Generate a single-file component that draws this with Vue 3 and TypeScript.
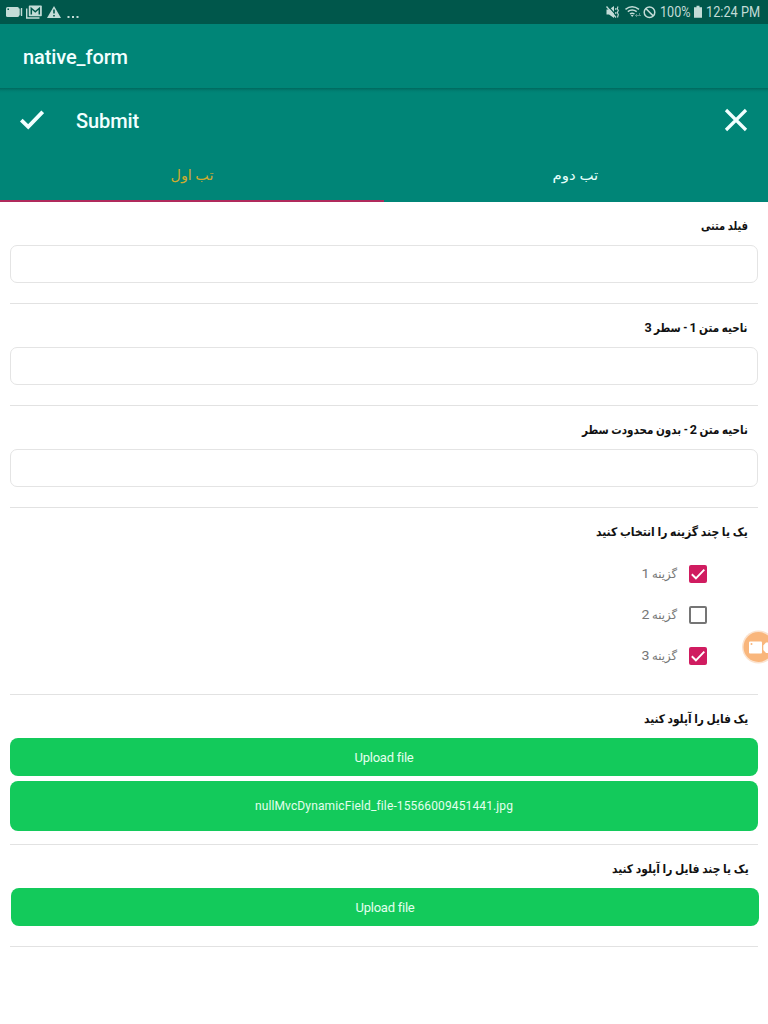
<script setup lang="ts">
import { nextTick, onMounted, reactive } from 'vue'

interface Label {
  text: string
  width: number
}

const labels: Record<string, Label> = {
  tab1: { text: 'تب اول', width: 43 },
  tab2: { text: 'تب دوم', width: 46 },
  field: { text: 'فیلد متنی', width: 47 },
  area1: { text: 'ناحیه متن 1 - سطر 3', width: 103 },
  area2: { text: 'ناحیه متن 2 - بدون محدودت سطر', width: 166 },
  choose: { text: 'یک یا چند گزینه را انتخاب کنید', width: 152 },
  file: { text: 'یک فایل را آپلود کنید', width: 104 },
  files: { text: 'یک یا چند فایل را آپلود کنید', width: 137 },
  opt1: { text: 'گزینه 1', width: 35 },
  opt2: { text: 'گزینه 2', width: 35 },
  opt3: { text: 'گزینه 3', width: 35 },
}

const textFields = ['field', 'area1', 'area2']
const options = [
  { key: 'opt1', checked: true },
  { key: 'opt2', checked: false },
  { key: 'opt3', checked: true },
]

const parts = (key: string) => labels[key].text.split(/(\d)/).filter((p) => p.length > 0)
const isDigit = (p: string) => /^\d$/.test(p)

const scales = reactive<Record<string, number>>({})

// Condense each Persian caption to its intended measure.
onMounted(async () => {
  await nextTick()
  document.querySelectorAll<HTMLElement>('[data-fit]').forEach((el) => {
    const key = el.dataset.fit as string
    if (el.offsetWidth > 0) scales[key] = labels[key].width / el.offsetWidth
  })
})

const fit = (key: string) => ({ transform: `scaleX(${scales[key] ?? 1})` })
</script>

<template>
  <div class="screen">
    <div class="status">
      <svg class="st-left" width="84" height="24" viewBox="0 0 84 24">
        <g fill="#c3dcd7">
          <rect x="6" y="7" width="13" height="10" rx="1.5" />
          <rect x="19.3" y="8.5" width="1" height="7" />
          <rect x="21" y="8" width="1.2" height="8" />
          <path d="M54 6 61 18H47Z" />
          <rect x="67.5" y="16" width="2" height="2" />
          <rect x="72" y="16" width="2" height="2" />
          <rect x="76.5" y="16" width="2" height="2" />
        </g>
        <rect x="7.5" y="8.5" width="1.5" height="1.5" fill="#00574b" />
        <path d="M54 9.500V13.500M54 15V16.500" stroke="#00574b" stroke-width="1.6" />
        <rect x="28.8" y="5.6" width="13" height="10.6" rx="0.8" fill="#c3dcd7" />
        <path d="M26.700 8.500V18H39.500" fill="none" stroke="#c3dcd7" stroke-width="1.4" />
        <path d="M31.300 14.500V8.300L35.300 11.800 39.300 8.300V14.500" fill="none" stroke="#00574b" stroke-width="1.5" />
      </svg>
      <svg class="st-icons" width="54" height="24" viewBox="604 0 54 24">
        <path d="M606.500 9.500H609L614 6V18L609 14.500H606.500Z" fill="#c3dcd7" />
        <path d="M608 6 617 16.200" stroke="#00574b" stroke-width="1.2" />
        <path d="M606.500 6.500 616 17.500" stroke="#c3dcd7" stroke-width="1.3" />
        <path d="M615.800 8V10M615.800 12V14M618 6.500 617.300 8.500 618.300 10.500 617.300 12.500 618.300 14.500 617.500 17.500" fill="none" stroke="#c3dcd7" stroke-width="1.1" />
        <path d="M625.500 9.300Q632 4 639 9.300M627.800 11.700Q632 8.400 636.700 11.700M630 14Q632 12.300 634.500 14" fill="none" stroke="#c3dcd7" stroke-width="1.5" />
        <path d="M630.700 15 632.200 17 633.700 15Z" fill="#c3dcd7" />
        <path d="M636.500 14V17M639.500 13V16M635 15.500H641" stroke="#5d948c" stroke-width="1" />
        <circle cx="649.5" cy="12.2" r="5.3" fill="none" stroke="#c3dcd7" stroke-width="1.5" />
        <path d="M645.800 8.500 653.200 15.900" stroke="#c3dcd7" stroke-width="1.5" />
      </svg>
      <span class="st-text pct">100%</span>
      <svg class="st-batt" width="8" height="24" viewBox="0 0 8 24">
        <path d="M2.500 5.800H5.500V7.300H8V17.800H0V7.300H2.500Z" fill="#c3dcd7" />
      </svg>
      <span class="st-text time">12:24 PM</span>
    </div>

    <header class="appbar"><span class="title">native_form</span></header>

    <div class="toolbar">
      <svg width="24" height="20" viewBox="0 0 24 20">
        <path d="M1.300 10.200 8.200 16.800 22.700 1.800" fill="none" stroke="#f1ffff" stroke-width="3.8" />
      </svg>
      <span class="submit">Submit</span>
      <svg class="close" width="24" height="24" viewBox="0 0 24 24">
        <path d="M2 2 22 22M22 2 2 22" stroke="#f1ffff" stroke-width="3.2" />
      </svg>
    </div>

    <nav class="tabs">
      <div class="tab active"><span class="tabtext" dir="rtl" data-fit="tab1" :style="fit('tab1')">{{ labels.tab1.text }}</span></div>
      <div class="tab"><span class="tabtext" dir="rtl" data-fit="tab2" :style="fit('tab2')">{{ labels.tab2.text }}</span></div>
    </nav>

    <main>
      <section v-for="key in textFields" :key="key">
        <div class="label"><span class="fa" dir="rtl" :data-fit="key" :style="fit(key)"><span v-for="(p, i) in parts(key)" :key="i" :class="{ digit: isDigit(p) }">{{ p }}</span></span></div>
        <div class="input"></div>
      </section>

      <section class="choices">
        <div class="label"><span class="fa" dir="rtl" data-fit="choose" :style="fit('choose')">{{ labels.choose.text }}</span></div>
        <div v-for="o in options" :key="o.key" class="option">
          <span class="fa opt" dir="rtl" :data-fit="o.key" :style="fit(o.key)"><span v-for="(p, i) in parts(o.key)" :key="i" :class="{ digit: isDigit(p) }">{{ p }}</span></span>
          <span class="box" :class="{ on: o.checked }">
            <svg v-if="o.checked" width="18" height="18" viewBox="0 0 18 18">
              <path d="M2.800 9.300 6.900 13.300 15.300 4.700" fill="none" stroke="#fff" stroke-width="1.9" />
            </svg>
          </span>
        </div>
      </section>

      <section class="upload">
        <div class="label"><span class="fa" dir="rtl" data-fit="file" :style="fit('file')">{{ labels.file.text }}</span></div>
        <div class="btn">Upload file</div>
        <div class="btn named">nullMvcDynamicField_file-15566009451441.jpg</div>
      </section>

      <section class="upload last">
        <div class="label"><span class="fa" dir="rtl" data-fit="files" :style="fit('files')">{{ labels.files.text }}</span></div>
        <div class="btn">Upload file</div>
      </section>
    </main>

    <div class="bubble">
      <svg width="34" height="34" viewBox="0 0 34 34">
        <circle cx="17.5" cy="17" r="16.5" fill="#fbe3cf" />
        <circle cx="17.5" cy="17" r="15" fill="#f9b67c" />
        <rect x="8" y="11.5" width="13" height="12" rx="1" fill="#fff" />
        <circle cx="10.5" cy="14" r="1" fill="#f9b67c" />
        <path d="M22.300 15.500 25 12.500H27V23H25L22.300 20Z" fill="#fff" />
      </svg>
    </div>
  </div>
</template>

<style>
body {
  margin: 0;
  background: #fff;
}
</style>

<style scoped>
.screen {
  position: relative;
  width: 768px;
  height: 1024px;
  overflow: hidden;
  background: #fff;
  font-family: Roboto, "DejaVu Sans", sans-serif;
}
.status {
  height: 24px;
  background: #00574b;
  display: flex;
  align-items: center;
}
.st-icons {
  margin-left: 520px;
}
.st-text {
  font-size: 14.5px;
  color: #c3dcd7;
  line-height: 24px;
  padding-top: 2px;
  white-space: nowrap;
  transform-origin: left center;
}
.pct {
  width: 34px;
  margin-left: 2px;
  transform: scaleX(0.87);
}
.st-batt {
  flex: none;
}
.time {
  margin-left: 4px;
  transform: scaleX(0.88);
}
.appbar {
  height: 64px;
  background: #008577;
  display: flex;
  align-items: center;
  padding: 2px 0 0 23px;
  box-sizing: border-box;
}
.title,
.submit {
  font-size: 20px;
  font-weight: 500;
  letter-spacing: -0.1px;
  color: #f1ffff;
}
.toolbar {
  height: 64px;
  background: linear-gradient(#00695e, #008073 3px, #008577 5px);
  display: flex;
  align-items: center;
  padding: 0 20px;
}
.submit {
  margin-left: 32px;
  padding-top: 2px;
}
.close {
  margin-left: auto;
}
.tabs {
  height: 50px;
  background: #008577;
  display: flex;
}
.tab {
  flex: 1;
  display: flex;
  justify-content: center;
  align-items: center;
  box-sizing: border-box;
  padding: 0 1px 3px 0;
  border-bottom: 2px solid transparent;
  color: #e6fffb;
}
.active {
  color: #cfab30;
  border-bottom-color: #b02a5c;
}
.tabtext {
  display: inline-block;
  font-size: 14px;
  white-space: nowrap;
}
main {
  padding: 0 10px;
}
section {
  height: 102px;
  box-sizing: border-box;
  border-bottom: 1px solid #e2e2e2;
}
.label {
  height: 43px;
  padding: 12px 10px 0 0;
  box-sizing: border-box;
  text-align: right;
}
.fa {
  display: inline-block;
  font-size: 12px;
  line-height: 24px;
  font-weight: 700;
  color: #111;
  white-space: nowrap;
  transform-origin: right center;
  vertical-align: top;
}
.digit {
  display: inline-block;
  font-size: 13px;
  line-height: 1;
  transform: scaleX(1.12);
}
.input {
  height: 38px;
  box-sizing: border-box;
  border: 1px solid #e4e4e4;
  border-radius: 7px;
}
.choices {
  height: 187px;
}
.option {
  height: 41px;
  display: flex;
  justify-content: flex-end;
  align-items: center;
  padding-right: 51px;
}
.choices .label + .option {
  margin-top: 2px;
}
.opt {
  font-weight: 400;
  color: #777;
  margin-right: 12px;
}
.box {
  width: 18px;
  height: 18px;
  box-sizing: border-box;
  border: 2px solid #757575;
  border-radius: 2px;
}
.on {
  border: 0;
  background: #d01c60;
}
.box svg {
  display: block;
}
.upload {
  height: 150px;
}
.last {
  height: 102px;
}
.last .label {
  padding-right: 9px;
}
.btn {
  height: 38px;
  border-radius: 8px;
  background: #13ca5b;
  color: #e3ffee;
  font-size: 13px;
  letter-spacing: -0.25px;
  display: flex;
  align-items: center;
  justify-content: center;
}
.named {
  height: 50px;
  margin-top: 5px;
  font-size: 12px;
  letter-spacing: 0.13px;
}
.last .btn {
  margin: 0 -1px 0 1px;
}
.bubble {
  position: absolute;
  left: 741px;
  top: 630px;
  height: 34px;
}
</style>
